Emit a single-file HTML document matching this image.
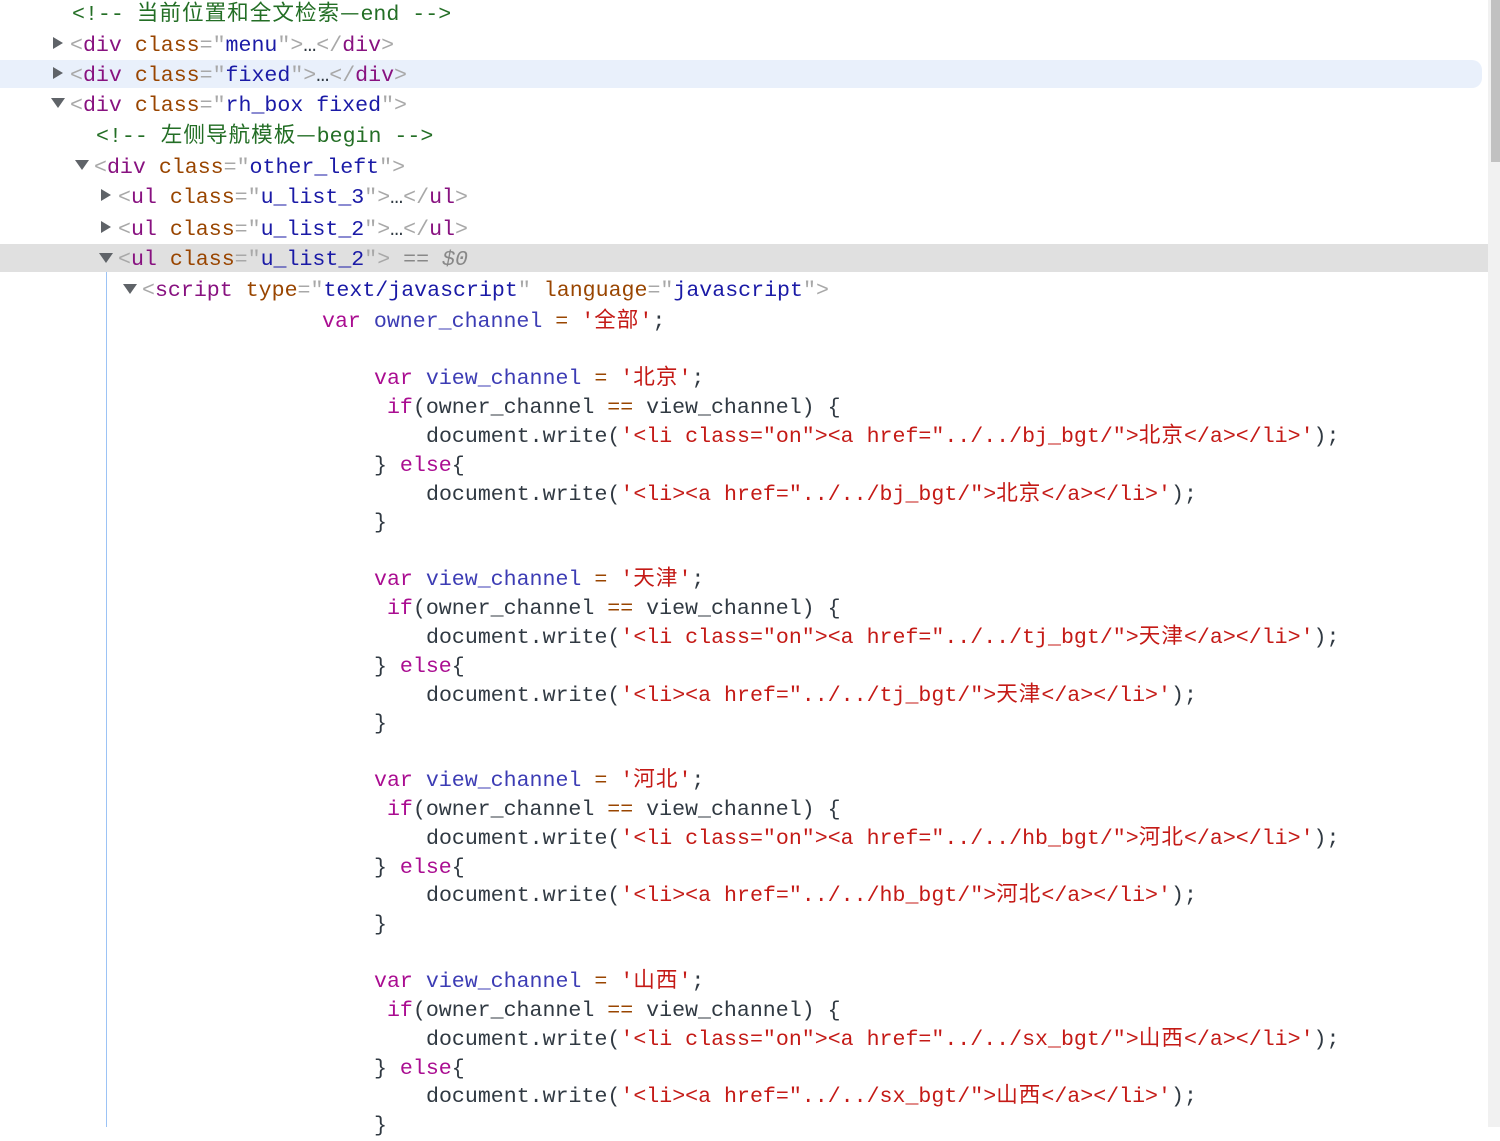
<!DOCTYPE html>
<html><head><meta charset="utf-8"><style>
html,body{margin:0;padding:0;}
body{width:1500px;height:1127px;overflow:hidden;background:#fff;position:relative;font-family:"Liberation Mono","Noto Sans CJK SC",monospace;font-size:21.6px;color:#303942;}
.l{position:absolute;height:30px;line-height:30px;white-space:pre;margin-top:2px;}
.z{font-family:"Noto Sans CJK SC","WenQuanYi Zen Hei",sans-serif;letter-spacing:1px;line-height:1;}
.t{color:#881280}.p{color:#a8a8a8}.a{color:#994500}.v{color:#1a1aa6}.c{color:#236e25}
.k{color:#aa0d91}.n{color:#3c3cb4}.s{color:#c41a16}.o{color:#994500}.g{color:#888;font-style:italic}
.tr{position:absolute;width:0;height:0;border-top:6px solid transparent;border-bottom:6px solid transparent;border-left:10px solid #5f6368;}
.td{position:absolute;width:0;height:0;border-left:7px solid transparent;border-right:7px solid transparent;border-top:10px solid #5f6368;}
</style></head><body>
<div style="position:absolute;left:0;top:60px;width:1482px;height:28px;background:#e9f0fb;border-radius:0 10px 10px 0"></div>
<div style="position:absolute;left:0;top:244px;width:1488px;height:28px;background:#e0e0e0"></div>
<div style="position:absolute;left:1488px;top:0;width:12px;height:1127px;background:#f1f1f1"></div>
<div style="position:absolute;left:1491px;top:0;width:9px;height:162px;background:#c1c1c1"></div>
<div style="position:absolute;left:106px;top:272px;width:1px;height:855px;background:#9cc3f5"></div>

<div class="l c" style="left:72px;top:-2px">&lt;!-- <span class="z">当前位置和全文检索—</span>end --&gt;</div>
<div class="tr" style="left:53px;top:37px"></div>
<div class="l" style="left:70px;top:29px"><span class="p">&lt;</span><span class="t">div</span> <span class="a">class</span><span class="p">="</span><span class="v">menu</span><span class="p">"&gt;</span>…<span class="p">&lt;/</span><span class="t">div</span><span class="p">&gt;</span></div>
<div class="tr" style="left:53px;top:67px"></div>
<div class="l" style="left:70px;top:59px"><span class="p">&lt;</span><span class="t">div</span> <span class="a">class</span><span class="p">="</span><span class="v">fixed</span><span class="p">"&gt;</span>…<span class="p">&lt;/</span><span class="t">div</span><span class="p">&gt;</span></div>
<div class="td" style="left:51px;top:98px"></div>
<div class="l" style="left:70px;top:89px"><span class="p">&lt;</span><span class="t">div</span> <span class="a">class</span><span class="p">="</span><span class="v">rh_box fixed</span><span class="p">"&gt;</span></div>
<div class="l c" style="left:96px;top:120px">&lt;!-- <span class="z">左侧导航模板—</span>begin --&gt;</div>
<div class="td" style="left:75px;top:160px"></div>
<div class="l" style="left:94px;top:151px"><span class="p">&lt;</span><span class="t">div</span> <span class="a">class</span><span class="p">="</span><span class="v">other_left</span><span class="p">"&gt;</span></div>
<div class="tr" style="left:101px;top:189px"></div>
<div class="l" style="left:118px;top:181px"><span class="p">&lt;</span><span class="t">ul</span> <span class="a">class</span><span class="p">="</span><span class="v">u_list_3</span><span class="p">"&gt;</span>…<span class="p">&lt;/</span><span class="t">ul</span><span class="p">&gt;</span></div>
<div class="tr" style="left:101px;top:221px"></div>
<div class="l" style="left:118px;top:213px"><span class="p">&lt;</span><span class="t">ul</span> <span class="a">class</span><span class="p">="</span><span class="v">u_list_2</span><span class="p">"&gt;</span>…<span class="p">&lt;/</span><span class="t">ul</span><span class="p">&gt;</span></div>
<div class="td" style="left:99px;top:253px"></div>
<div class="l" style="left:118px;top:243px"><span class="p">&lt;</span><span class="t">ul</span> <span class="a">class</span><span class="p">="</span><span class="v">u_list_2</span><span class="p">"&gt;</span> <span class="g">== $0</span></div>
<div class="td" style="left:123px;top:284px"></div>
<div class="l" style="left:142px;top:274px"><span class="p">&lt;</span><span class="t">script</span> <span class="a">type</span><span class="p">="</span><span class="v">text/javascript</span><span class="p">"</span> <span class="a">language</span><span class="p">="</span><span class="v">javascript</span><span class="p">"&gt;</span></div>
<div class="l" style="left:322px;top:305px"><span class="k">var</span> <span class="n">owner_channel</span> <span class="o">=</span> <span class="s">'<span class="z">全部</span>'</span>;</div>

<div class="l" style="left:374px;top:362px"><span class="k">var</span> <span class="n">view_channel</span> <span class="o">=</span> <span class="s">'<span class="z">北京</span>'</span>;</div>
<div class="l" style="left:374px;top:391px"> <span class="k">if</span>(owner_channel <span class="o">==</span> view_channel) {</div>
<div class="l" style="left:426px;top:420px">document.write(<span class="s">'&lt;li class="on"&gt;&lt;a href="../../bj_bgt/"&gt;<span class="z">北京</span>&lt;/a&gt;&lt;/li&gt;'</span>);</div>
<div class="l" style="left:374px;top:449px">} <span class="k">else</span>{</div>
<div class="l" style="left:426px;top:478px">document.write(<span class="s">'&lt;li&gt;&lt;a href="../../bj_bgt/"&gt;<span class="z">北京</span>&lt;/a&gt;&lt;/li&gt;'</span>);</div>
<div class="l" style="left:374px;top:506px">}</div>

<div class="l" style="left:374px;top:563px"><span class="k">var</span> <span class="n">view_channel</span> <span class="o">=</span> <span class="s">'<span class="z">天津</span>'</span>;</div>
<div class="l" style="left:374px;top:592px"> <span class="k">if</span>(owner_channel <span class="o">==</span> view_channel) {</div>
<div class="l" style="left:426px;top:621px">document.write(<span class="s">'&lt;li class="on"&gt;&lt;a href="../../tj_bgt/"&gt;<span class="z">天津</span>&lt;/a&gt;&lt;/li&gt;'</span>);</div>
<div class="l" style="left:374px;top:650px">} <span class="k">else</span>{</div>
<div class="l" style="left:426px;top:679px">document.write(<span class="s">'&lt;li&gt;&lt;a href="../../tj_bgt/"&gt;<span class="z">天津</span>&lt;/a&gt;&lt;/li&gt;'</span>);</div>
<div class="l" style="left:374px;top:707px">}</div>

<div class="l" style="left:374px;top:764px"><span class="k">var</span> <span class="n">view_channel</span> <span class="o">=</span> <span class="s">'<span class="z">河北</span>'</span>;</div>
<div class="l" style="left:374px;top:793px"> <span class="k">if</span>(owner_channel <span class="o">==</span> view_channel) {</div>
<div class="l" style="left:426px;top:822px">document.write(<span class="s">'&lt;li class="on"&gt;&lt;a href="../../hb_bgt/"&gt;<span class="z">河北</span>&lt;/a&gt;&lt;/li&gt;'</span>);</div>
<div class="l" style="left:374px;top:851px">} <span class="k">else</span>{</div>
<div class="l" style="left:426px;top:879px">document.write(<span class="s">'&lt;li&gt;&lt;a href="../../hb_bgt/"&gt;<span class="z">河北</span>&lt;/a&gt;&lt;/li&gt;'</span>);</div>
<div class="l" style="left:374px;top:908px">}</div>

<div class="l" style="left:374px;top:965px"><span class="k">var</span> <span class="n">view_channel</span> <span class="o">=</span> <span class="s">'<span class="z">山西</span>'</span>;</div>
<div class="l" style="left:374px;top:994px"> <span class="k">if</span>(owner_channel <span class="o">==</span> view_channel) {</div>
<div class="l" style="left:426px;top:1023px">document.write(<span class="s">'&lt;li class="on"&gt;&lt;a href="../../sx_bgt/"&gt;<span class="z">山西</span>&lt;/a&gt;&lt;/li&gt;'</span>);</div>
<div class="l" style="left:374px;top:1052px">} <span class="k">else</span>{</div>
<div class="l" style="left:426px;top:1080px">document.write(<span class="s">'&lt;li&gt;&lt;a href="../../sx_bgt/"&gt;<span class="z">山西</span>&lt;/a&gt;&lt;/li&gt;'</span>);</div>
<div class="l" style="left:374px;top:1109px">}</div>
</body></html>
